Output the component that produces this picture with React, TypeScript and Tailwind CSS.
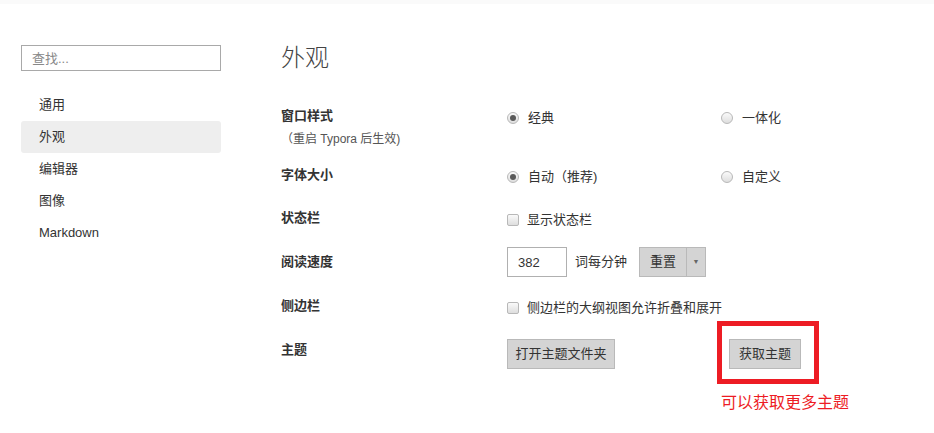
import React from 'react';

const Radio: React.FC<{ checked?: boolean; label: string }> = ({ checked, label }) => (
  <div className="mt-[2px] flex h-5 items-center gap-[9px]">
    <span className="flex h-[12px] w-[12px] items-center justify-center rounded-full border border-[#b8b8b8] bg-linear-to-b from-[#fafafa] to-[#dedede]">
      {checked && <span className="h-[6px] w-[6px] rounded-full bg-[#5a5a5a]" />}
    </span>
    <span>{label}</span>
  </div>
);

const Checkbox: React.FC<{ label: string }> = ({ label }) => (
  <div className="mt-[2px] flex h-5 items-center gap-[8px]">
    <span className="h-[12px] w-[12px] rounded-[2px] border border-[#b8b8b8] bg-linear-to-b from-[#fafafa] to-[#dedede]" />
    <span>{label}</span>
  </div>
);

const navItems = ['通用', '外观', '编辑器', '图像', 'Markdown'];

const Row: React.FC<{ label: React.ReactNode; h: string; children?: React.ReactNode; extra?: React.ReactNode }> = ({
  label,
  h,
  children,
  extra,
}) => (
  <div className={`grid grid-cols-[226px_214px_1fr] items-start ${h}`}>
    <div>{label}</div>
    <div>{children}</div>
    <div>{extra}</div>
  </div>
);

const Label: React.FC<{ text: string }> = ({ text }) => <div className="h-5 leading-5 font-bold text-[#333]">{text}</div>;

export default function App() {
  return (
    <div className="h-[433px] w-[934px] overflow-hidden bg-white text-[13px] leading-5 text-[#333] font-['Liberation_Sans','Noto_Sans_CJK_SC',sans-serif]">
      <div className="h-1 bg-[#fafafa]" />
      <div className="flex">
        <aside className="ml-[21px] mt-[41px] w-[200px]">
          <input
            placeholder="查找..."
            className="h-[26px] w-full border border-[#a9a9a9] px-[10px] text-[13px] text-[#333] outline-none placeholder:text-[#888]"
          />
          <nav className="mt-[18px]">
            {navItems.map((item) => (
              <div
                key={item}
                className={`flex h-8 items-center rounded-[3px] pl-[18px] ${item === '外观' ? 'bg-[#eeeeee]' : ''}`}
              >
                {item}
              </div>
            ))}
          </nav>
        </aside>

        <main className="ml-[60px] flex-1">
          <h1 className="mt-[38px] h-8 text-[24px] leading-8 font-light text-[#444]">外观</h1>

          <div className="mt-[32px]">
            <Row
              h="h-[59px]"
              label={
                <>
                  <Label text="窗口样式" />
                  <div className="mt-[3px] text-[12px] leading-5 text-[#555]">（重启 Typora 后生效)</div>
                </>
              }
              extra={<Radio label="一体化" />}
            >
              <Radio checked label="经典" />
            </Row>

            <Row h="h-[43px]" label={<Label text="字体大小" />} extra={<Radio label="自定义" />}>
              <Radio checked label="自动（推荐)" />
            </Row>

            <Row h="h-[44px]" label={<Label text="状态栏" />}>
              <Checkbox label="显示状态栏" />
            </Row>

            <div className="grid h-[44px] grid-cols-[226px_1fr] items-start">
              <Label text="阅读速度" />
              <div className="flex h-5 items-center">
                <input
                  defaultValue="382"
                  className="h-[30px] w-[60px] border border-[#b0b0b0] px-[10px] text-[13px] text-[#333] outline-none"
                />
                <span className="ml-[8px]">词每分钟</span>
                <div className="ml-[12px] flex h-[30px] border border-[#b9b9b9] bg-[#d4d4d4]">
                  <span className="flex w-[47px] items-center justify-center border-r border-[#b9b9b9]">重置</span>
                  <span className="flex w-[18px] items-center justify-center text-[7px] text-[#666]">▼</span>
                </div>
              </div>
            </div>

            <div className="grid h-[44px] grid-cols-[226px_1fr] items-start">
              <Label text="侧边栏" />
              <Checkbox label="侧边栏的大纲视图允许折叠和展开" />
            </div>

            <Row
              h="h-[60px]"
              label={<Label text="主题" />}
              extra={
                <div className="relative ml-[8px] -mt-[1px] w-[72px]">
                  <button className="flex h-[30px] w-[72px] items-center justify-center border border-[#b9b9b9] bg-[#d4d4d4] text-[#333]">
                    获取主题
                  </button>
                  <div className="absolute -left-[12px] -top-[18px] h-[63px] w-[102px] border-[5px] border-[#ed1c24]" />
                  <div className="absolute -left-[8px] top-[54px] whitespace-nowrap text-[16px] leading-5 text-[#ed1c24]">
                    可以获取更多主题
                  </div>
                </div>
              }
            >
              <button className="-mt-[1px] flex h-[30px] w-[108px] items-center justify-center border border-[#b9b9b9] bg-[#d4d4d4] text-[#333]">
                打开主题文件夹
              </button>
            </Row>
          </div>
        </main>
      </div>
    </div>
  );
}
